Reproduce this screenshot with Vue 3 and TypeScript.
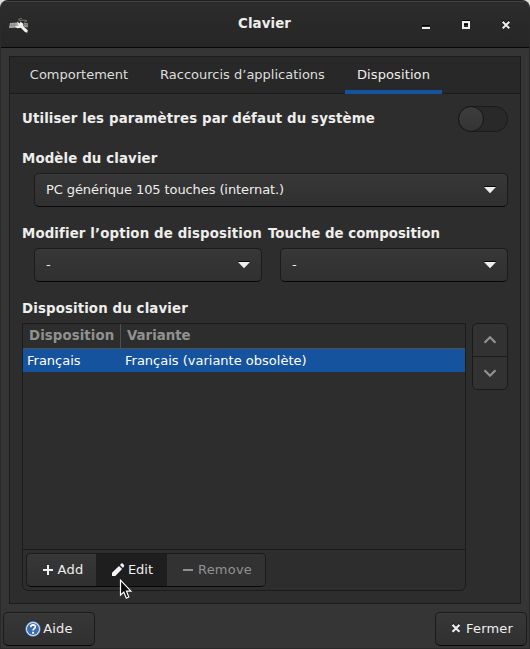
<script setup lang="ts">
import { ref } from 'vue'

interface Layout {
  name: string
  variant: string
}

const tabs: string[] = ['Comportement', 'Raccourcis d’applications', 'Disposition']
const activeTab = ref(2)
const useDefaults = ref(false)
const layouts = ref<Layout[]>([{ name: 'Français', variant: 'Français (variante obsolète)' }])
const selected = ref(0)
</script>

<template>
  <div class="backdrop">
    <div class="window">
      <header class="titlebar">
        <svg class="app-icon" width="20" height="20" viewBox="0 0 20 20">
          <path d="M9 4.500 L13 3.300 M9.500 6 Q12 4.700 17.500 5.300 Q19 6.300 15 7.300" fill="none" stroke="#85857f" stroke-width=".8" />
          <path d="M1 8 L9 7.500 L9.500 12.500 L0 13 Z" fill="#aaaaa6" />
          <path d="M15 8 L18.800 8 L19 12.500 L14 12 Z" fill="#8b8b87" />
          <path d="M2 9.200 H7 M1.700 10.700 H7 M15 9.500 H18" stroke="#5b5b58" stroke-width=".7" stroke-dasharray="1 .7" />
          <path d="M8 6.800 L11 8.600 L11.300 6.500 L14.300 8.800 L14 11 L18.800 15.200 L18.200 17.800 L16 17 L11.700 12.700 L8.500 13.200 L5.800 11.500 L9.500 10.800 Z" fill="#f1f1ed" />
        </svg>
        <h1 class="title">Clavier</h1>
        <div class="controls">
          <svg width="8" height="10" viewBox="0 0 8 10"><path d="M0 5.500h8" stroke="#000" /><path d="M0 8h8" stroke="#eeeeec" stroke-width="2" /></svg>
          <svg width="8" height="10" viewBox="0 0 8 10"><path d="M0 .5h8M2 4.500h4" stroke="#000" /><path d="M1 2h6v6H1z" fill="none" stroke="#eeeeec" stroke-width="2" /></svg>
          <svg width="8" height="10" viewBox="0 0 8 10"><path d="M.7 .7L7.300 7.300M7.300 .7L.7 7.300" stroke="#000" stroke-width="1.800" /><path d="M.7 1.700L7.300 8.300M7.300 1.700L.7 8.300" stroke="#eeeeec" stroke-width="2" /></svg>
        </div>
      </header>

      <main class="notebook">
        <nav class="tabs">
          <button v-for="(tab, i) in tabs" :key="tab" class="tab" :class="['tab-' + i, { active: i === activeTab }]" @click="activeTab = i">{{ tab }}</button>
        </nav>
        <section class="page">
          <div class="default-row">
            <span class="label">Utiliser les paramètres par défaut du système</span>
            <button class="switch" :class="{ on: useDefaults }" @click="useDefaults = !useDefaults"><i class="knob" /></button>
          </div>
          <div class="label">Modèle du clavier</div>
          <button class="btn combo">
            <span class="model">PC générique 105 touches (internat.)</span>
            <svg width="12" height="8" viewBox="0 0 12 8"><path d="M0 0h12v1H0z" fill="#080808" /><path d="M0 1h12L6 7.300z" fill="#eeeeec" /></svg>
          </button>
          <div class="options">
            <div class="option">
              <div class="label">Modifier l’option de disposition</div>
              <button class="btn combo">
                <span>-</span>
                <svg width="12" height="8" viewBox="0 0 12 8"><path d="M0 0h12v1H0z" fill="#080808" /><path d="M0 1h12L6 7.300z" fill="#eeeeec" /></svg>
              </button>
            </div>
            <div class="option">
              <div class="label compose">Touche de composition</div>
              <button class="btn combo">
                <span>-</span>
                <svg width="12" height="8" viewBox="0 0 12 8"><path d="M0 0h12v1H0z" fill="#080808" /><path d="M0 1h12L6 7.300z" fill="#eeeeec" /></svg>
              </button>
            </div>
          </div>
          <div class="label">Disposition du clavier</div>
          <div class="list-area">
            <div class="list">
              <div class="list-head">
                <div class="col">Disposition</div>
                <div class="col">Variante</div>
              </div>
              <div class="rows">
                <div v-for="(l, i) in layouts" :key="l.name" class="row" :class="{ selected: i === selected }" @click="selected = i">
                  <span class="cell">{{ l.name }}</span>
                  <span class="cell">{{ l.variant }}</span>
                </div>
              </div>
              <div class="toolbar">
                <div class="btn group">
                  <button class="tool add">
                    <svg width="12" height="12" viewBox="0 0 12 12"><path d="M1 6h10M6 1v10" stroke="#eeeeec" stroke-width="2" /></svg>
                    <span>Add</span>
                  </button>
                  <button class="tool edit">
                    <svg width="14" height="14" viewBox="0 0 14 14"><path d="M1 13v-3.300L8 2.900 11.100 6 4.300 13z M9 1.900l1.300-1.300q.7-.6 1.400 0l1.300 1.300q.6.700 0 1.400L12 5z" fill="#f4f4f2" /></svg>
                    <span>Edit</span>
                  </button>
                  <button class="tool remove" disabled>
                    <svg width="12" height="12" viewBox="0 0 12 12"><path d="M1 6h10" stroke="#919190" stroke-width="2" /></svg>
                    <span>Remove</span>
                  </button>
                </div>
              </div>
            </div>
            <div class="mover">
              <button class="move"><svg width="14" height="10" viewBox="0 0 14 10"><path d="M1.500 7.800L7 2.300l5.500 5.500" fill="none" stroke="#919190" stroke-width="2.200" /></svg></button>
              <button class="move"><svg width="14" height="10" viewBox="0 0 14 10"><path d="M1.500 2.200L7 7.700l5.500-5.500" fill="none" stroke="#919190" stroke-width="2.200" /></svg></button>
            </div>
          </div>
        </section>
      </main>

      <footer class="actions">
        <button class="btn action help">
          <svg width="16" height="16" viewBox="0 0 16 16">
            <circle cx="8" cy="8" r="7.400" fill="#e7eef7" stroke="#3465a4" stroke-width=".7" />
            <circle cx="8" cy="8" r="6" fill="#3b6cac" />
            <path d="M5.700 6.100Q5.800 3.900 8.100 3.900Q10.400 4 10.300 6Q10.200 7 9 7.900Q8.100 8.600 8.100 9.500" fill="none" stroke="#fff" stroke-width="1.700" />
            <path d="M7.100 10.800h2v1.900h-2z" fill="#fff" />
          </svg>
          <span>Aide</span>
        </button>
        <button class="btn action close">
          <svg width="10" height="11" viewBox="0 0 10 11"><path d="M1.500 .8L8.500 7.800M8.500 .8L1.500 7.800" stroke="#000" stroke-width="1.800" /><path d="M1.500 1.800L8.500 8.800M8.500 1.800L1.500 8.800" stroke="#eeeeec" stroke-width="2.200" /></svg>
          <span>Fermer</span>
        </button>
      </footer>
    </div>
    <svg class="pointer" width="14" height="21" viewBox="0 0 14 21"><path d="M1.500 1.200V16.200L4.800 13L7.300 19.200L9.800 18L7.500 12.200H11.900Z" fill="#080808" stroke="#fff" stroke-width="1.200" /></svg>
  </div>
</template>

<style>
body { margin: 0; }
</style>

<style scoped>
* { box-sizing: border-box; }
.backdrop { position: relative; width: 530px; height: 649px; background: #deded9; }
.window {
  display: flex; flex-direction: column; width: 530px; height: 649px; overflow: hidden;
  border-radius: 8px 8px 0 0; background: #353535; color: #eeeeec;
  border: 1px solid #2a2a2a; border-top-color: #202020;
  font: 13px/16px "DejaVu Sans", sans-serif;
}
button { border: 0; background: none; color: inherit; font: inherit; padding: 0; margin: 0; }
svg { display: block; flex: none; }
.titlebar {
  display: grid; grid-template-columns: 100px 1fr 100px; align-items: center; flex: none;
  height: 47px; border-top: 1px solid #414141; border-bottom: 1px solid #070707;
  background: linear-gradient(#2c2c2c, #262626);
}
.app-icon { margin-left: 8px; margin-top: 1px; }
.title { margin: 0 1px 2px 0; text-align: center; font-size: 13.333px; line-height: 16px; font-weight: bold; letter-spacing: .1px; }
.controls { display: flex; gap: 32px; justify-content: flex-end; padding-right: 19px; }
.notebook { display: flex; flex-direction: column; flex: none; margin: 8px 8px 0; height: 548px; border: 1px solid #1c1c1c; background: #2d2d2d; }
.tabs { display: flex; gap: 8px; height: 37px; padding: 0 8px; border-bottom: 1px solid #1c1c1c; background: #282828; flex: none; }
.tab { height: 37px; padding: 3px 0 0; border-bottom: 4px solid transparent; white-space: nowrap; color: #dededc; }
.tab-0 { width: 122px; }
.tab-1 { width: 189px; }
.tab-2 { width: 97px; letter-spacing: .1px; }
.tab.active { border-bottom-color: #15539e; color: #eeeeec; }
.page { flex: 1; padding: 12px 12px 0; }
.label { font-size: 13.333px; font-weight: bold; line-height: 16px; letter-spacing: .13px; white-space: nowrap; }
.compose { letter-spacing: 0; }
.default-row { display: flex; align-items: center; justify-content: space-between; height: 26px; margin-bottom: 19px; }
.switch { display: block; width: 50px; height: 26px; border: 1px solid #1b1b1b; border-radius: 13px; background: #292929; }
.knob { display: block; width: 26px; height: 26px; margin: -1px; border: 1px solid #161616; border-radius: 50%; background: linear-gradient(#3d3d3d, #343434); }
.btn {
  display: flex; align-items: center; height: 34px; border: 1px solid #1b1b1b; border-bottom-color: #070707;
  border-radius: 5px; background: linear-gradient(#373737, #303030); box-shadow: inset 0 1px #3b3b3b;
}
.combo { width: calc(100% - 12px); margin: 6px 0 0 12px; padding: 0 11px; justify-content: space-between; }
.model { letter-spacing: -.09px; }
.options { display: grid; grid-template-columns: 240px 240px; gap: 6px; margin: 19px 0; }
.option { min-width: 0; }
.list-area { display: flex; align-items: flex-start; gap: 6px; margin-top: 6px; }
.list { display: flex; flex-direction: column; width: 444px; height: 268px; border: 1px solid #1b1b1b; border-radius: 0 0 6px 6px; }
.list-head { display: grid; grid-template-columns: 98px 1fr; height: 25px; border-bottom: 1px solid #505050; color: #919190; font-size: 13.333px; font-weight: bold; flex: none; }
.col { padding: 4px 6px 0; }
.col:first-child { border-right: 1px solid #505050; letter-spacing: .08px; }
.rows { flex: 1; }
.row { display: grid; grid-template-columns: 98px 1fr; height: 23px; align-items: center; }
.row.selected { background: #15539e; color: #fff; }
.cell { padding: 0 4px; }
.toolbar { height: 41px; padding: 3px; border-top: 1px solid #1b1b1b; flex: none; }
.group { width: 240px; overflow: hidden; }
.tool { display: flex; align-items: center; justify-content: center; height: 32px; }
.add { width: 69px; gap: 4px; padding-left: 2px; letter-spacing: .2px; }
.edit { width: 71px; gap: 3px; padding-left: 1px; background: #1e1e1e; }
.remove { width: 98px; gap: 4px; padding-left: 2px; background: #323232; color: #919190; letter-spacing: .2px; }
.mover { width: 36px; height: 67px; border: 1px solid #1b1b1b; border-radius: 5px; background: #323232; overflow: hidden; }
.move { display: flex; width: 34px; height: 32px; align-items: center; justify-content: center; }
.move + .move { height: 33px; border-top: 1px solid #1b1b1b; }
.actions { display: flex; justify-content: space-between; padding: 8px 2px 0; }
.action { width: 92px; justify-content: center; letter-spacing: .15px; }
.help { gap: 2px; }
.close { gap: 5px; padding-left: 2px; }
.close svg { margin-top: -1px; }
.pointer { position: absolute; left: 119px; top: 579px; }
</style>
